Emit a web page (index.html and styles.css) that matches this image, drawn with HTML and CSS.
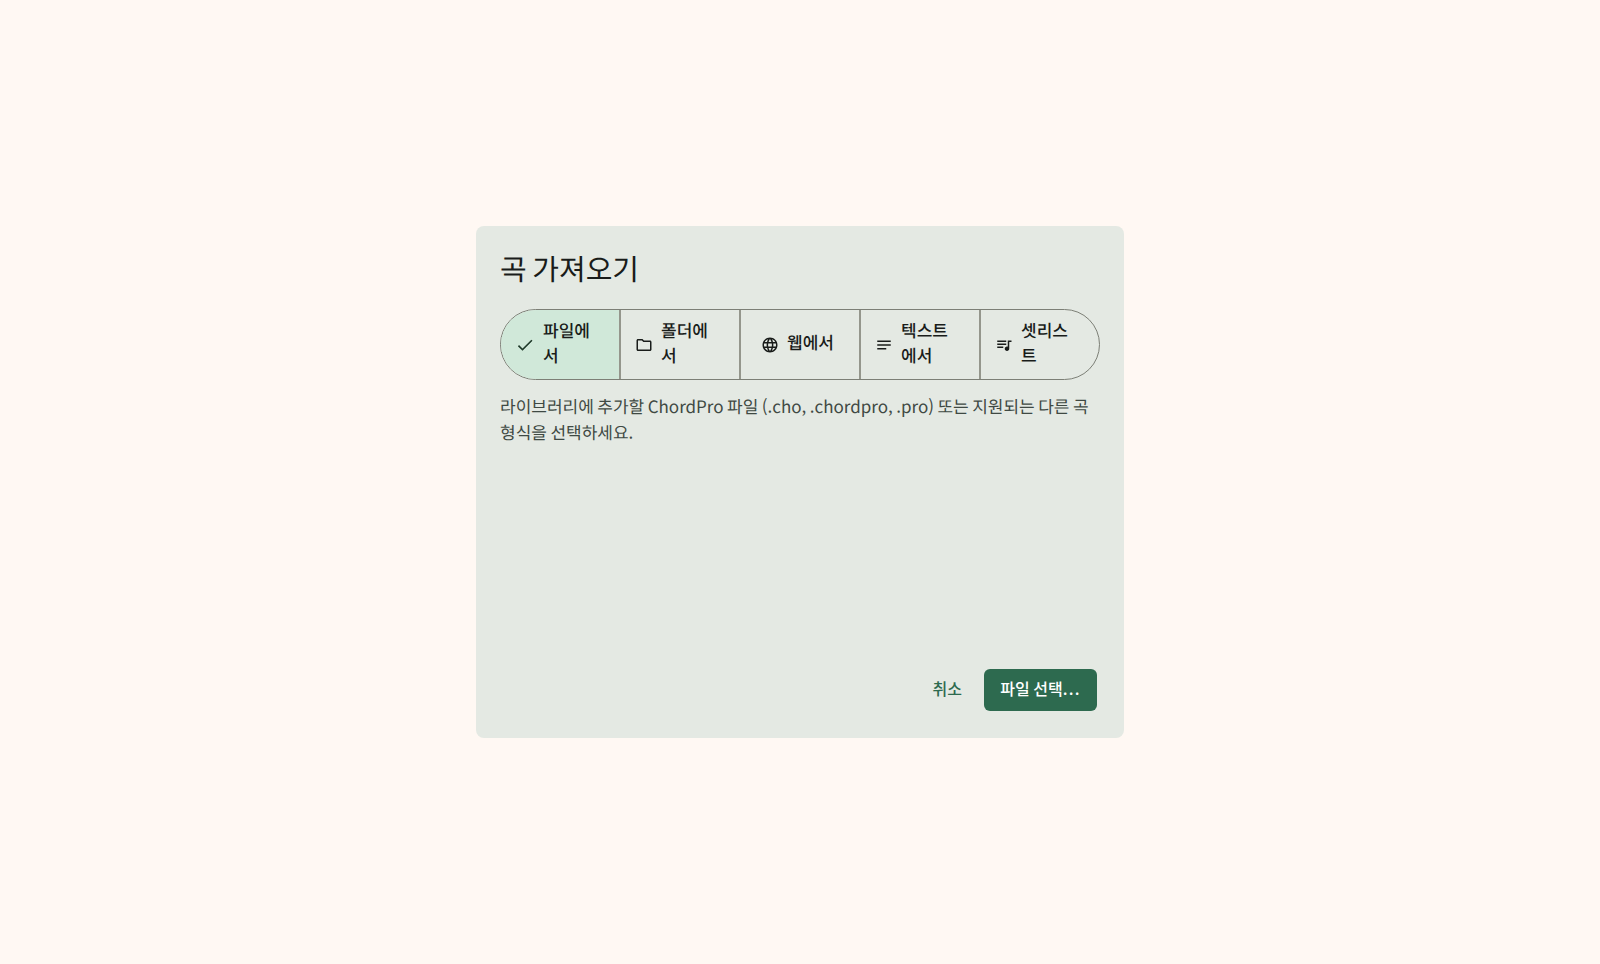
FILE: index.html
```html
<!DOCTYPE html>
<html lang="ko">
 <head>
  <title>곡 가져오기</title>
  <meta charset="UTF-8">
  <link rel="stylesheet" href="styles.css">
 </head>
 <body>

 <div class="dialog">
  <h1 class="dialog-title">곡 가져오기</h1>

  <div class="segments">
   <div class="segment selected">
    <svg class="icon check" viewBox="0 0 24 24"><path d="M9 16.17L4.83 12l-1.42 1.41L9 19 21 7l-1.41-1.41z"/></svg>
    <span class="label">파일에서</span>
   </div>
   <div class="segment">
    <svg class="icon" viewBox="0 0 24 24"><path d="M9.17 6l2 2H20v10H4V6h5.17M10 4H4c-1.1 0-1.99.9-1.99 2L2 18c0 1.1.9 2 2 2h16c1.1 0 2-.9 2-2V8c0-1.1-.9-2-2-2h-8l-2-2z"/></svg>
    <span class="label">폴더에서</span>
   </div>
   <div class="segment">
    <svg class="icon" viewBox="0 0 24 24"><path d="M11.99 2C6.47 2 2 6.48 2 12s4.47 10 9.99 10C17.52 22 22 17.52 22 12S17.52 2 11.99 2zm6.93 6h-2.95c-.32-1.25-.78-2.45-1.38-3.56 1.84.63 3.37 1.91 4.33 3.56zM12 4.04c.83 1.2 1.48 2.53 1.91 3.96h-3.82c.43-1.43 1.08-2.76 1.91-3.96zM4.26 14C4.1 13.36 4 12.69 4 12s.1-1.36.26-2h3.38c-.08.66-.14 1.32-.14 2 0 .68.06 1.34.14 2H4.26zm.82 2h2.95c.32 1.25.78 2.45 1.38 3.56-1.84-.63-3.37-1.9-4.33-3.56zm2.95-8H5.08c.96-1.66 2.49-2.93 4.33-3.56C8.81 5.55 8.35 6.75 8.03 8zM12 19.96c-.83-1.2-1.48-2.53-1.91-3.96h3.82c-.43 1.43-1.08 2.76-1.91 3.96zM14.34 14H9.66c-.09-.66-.16-1.32-.16-2 0-.68.07-1.35.16-2h4.68c.09.65.16 1.32.16 2 0 .68-.07 1.34-.16 2zm.25 5.56c.6-1.11 1.06-2.31 1.38-3.56h2.95c-.96 1.65-2.49 2.93-4.33 3.56zM16.36 14c.08-.66.14-1.32.14-2 0-.68-.06-1.34-.14-2h3.38c.16.64.26 1.31.26 2s-.1 1.36-.26 2h-3.38z"/></svg>
    <span class="label">웹에서</span>
   </div>
   <div class="segment">
    <svg class="icon" viewBox="0 0 24 24"><path d="M21 11.01L3 11v2h18zM3 16h12v2H3zM21 6H3v2.01L21 8z"/></svg>
    <span class="label">텍스트 에서</span>
   </div>
   <div class="segment">
    <svg class="icon" viewBox="0 0 24 24"><path d="M15 6H3v2h12V6zm0 4H3v2h12v-2zM3 16h8v-2H3v2zM17 6v8.18c-.31-.11-.65-.18-1-.18-1.66 0-3 1.34-3 3s1.34 3 3 3 3-1.34 3-3V8h3V6h-5z"/></svg>
    <span class="label">셋리스트</span>
   </div>
  </div>

  <p class="description">라이브러리에 추가할 ChordPro 파일 (.cho, .chordpro, .pro) 또는 지원되는 다른 곡 형식을 선택하세요.</p>

  <div class="actions">
   <button class="btn-text">취소</button>
   <button class="btn-primary">파일 선택<span class="dots">...</span></button>
  </div>
 </div>

</body>
</html>
```

FILE: styles.css
```css
body { margin: 0; height: 964px; background: #fff8f3; display: flex; align-items: center; justify-content: center; font-family: "Noto Sans CJK KR", "Noto Sans", sans-serif; color: #191c1a; text-rendering: geometricPrecision; }
.dialog { width: 648px; height: 512px; box-sizing: border-box; padding: 24px 27px 27px 24px; background: #e4e9e3; border-radius: 8px; display: flex; flex-direction: column; }
.dialog-title { margin: 0 0 22px; font-size: 29px; font-weight: 400; line-height: 37px; word-spacing: -2.5px; }

.segments { display: grid; grid-template-columns: 119px 120px 120px 120px 119px; width: 600px; height: 71px; box-sizing: border-box; border: 1px solid #7c7f76; border-radius: 36px; overflow: hidden; }
.segment { display: flex; align-items: center; justify-content: center; gap: 8px; margin-left: -1px; padding: 0 20px 0 14px; border-left: 2px solid #94968c; font-size: 17px; font-weight: 500; line-height: 25.5px; }
.segment:first-child { border-left: 0; margin-left: 0; padding-left: 14px; }
.segment.selected { background: #d0e8d9; }
.label { flex: 0 1 auto; word-break: break-all; margin-top: -5px; }
.icon { width: 18px; height: 18px; flex: none; fill: #191c1a; }
.icon.check { width: 20px; height: 20px; fill: #1f3a2a; }

.description { margin: 13px 0 0; width: 600px; font-size: 17px; word-spacing: -1.3px; line-height: 25.5px; color: #3f4943; word-break: keep-all; }

.actions { margin-top: auto; display: flex; justify-content: flex-end; align-items: center; gap: 6px; }
.actions button { height: 42px; font-family: inherit; font-size: 16px; font-weight: 500; border: 0; border-radius: 6px; padding: 0 16px 4px; }
.btn-text { background: none; color: #2d6a4f; }
.btn-primary { width: 113px; background: #2d6a4f; color: #fff; white-space: nowrap; font-size: 15.6px; word-spacing: -1px; }
.dots { letter-spacing: 1.2px; }
```
